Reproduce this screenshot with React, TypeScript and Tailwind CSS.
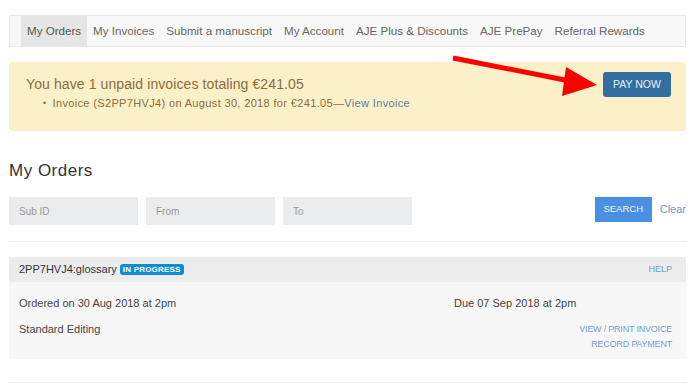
import React from "react";

export default function App() {
  const tabs = ["My Orders", "My Invoices", "Submit a manuscript", "My Account", "AJE Plus & Discounts", "AJE PrePay", "Referral Rewards"];
  return (
    <div className="relative w-[695px] h-[392px] bg-white px-[9px] overflow-hidden" style={{ fontFamily: '"Liberation Sans", Arial, sans-serif' }}>
      {/* nav */}
      <div className="mt-[15px] h-[32px] w-[677px] border border-[#e7e7e7] bg-[#f8f8f8] flex items-stretch pl-[11px]">
        {tabs.map((t, i) => (
          <div
            key={t}
            className={`flex items-center px-[6px] whitespace-nowrap text-[11.6px] ${i === 0 ? "bg-[#e5e5e5] text-[#555]" : "text-[#666]"}`}
          >
            {t}
          </div>
        ))}
      </div>

      {/* banner */}
      <div className="mt-[15px] h-[69px] w-[677px] rounded-[4px] bg-[#fcf0c9] flex justify-between pl-[17px] pr-[15px]">
        <div className="pt-[13px]">
          <div className="text-[14px] leading-[18px] text-[#8a6d3b] tracking-[0.1px] whitespace-nowrap">You have 1 unpaid invoices totaling €241.05</div>
          <div className="mt-[3px] flex items-center text-[11px] leading-[14px] text-[#8a6d3b] pl-[17px] tracking-[0.35px] whitespace-nowrap">
            <span className="mr-[6px] text-[9px]">•</span>
            <span>Invoice (S2PP7HVJ4) on August 30, 2018 for €241.05—</span>
            <span className="text-[#5b7fa3]">View Invoice</span>
          </div>
        </div>
        <div className="pt-[10px]">
          <div className="w-[68px] h-[25px] rounded-[3px] bg-[#326fa0] flex items-center justify-center text-[10.5px] text-[#e6eef5]">PAY NOW</div>
        </div>
      </div>

      {/* heading */}
      <div className="mt-[30px] text-[17px] leading-[20px] text-[#333] tracking-[0.5px]">My Orders</div>

      {/* search row */}
      <div className="mt-[16px] flex items-start">
        <div className="w-[129px] h-[28px] bg-[#ebeced] flex items-center pl-[10px] text-[10px] text-[#999]">Sub ID</div>
        <div className="ml-[8px] w-[129px] h-[28px] bg-[#ebeced] flex items-center pl-[10px] text-[10px] text-[#999]">From</div>
        <div className="ml-[8px] w-[129px] h-[28px] bg-[#ebeced] flex items-center pl-[10px] text-[10px] text-[#999]">To</div>
        <div className="ml-auto w-[57px] h-[25px] bg-[#4a90e2] flex items-center justify-center text-[9.5px] text-[#eef4fc]">SEARCH</div>
        <div className="ml-[8px] h-[25px] flex items-center text-[11px] text-[#6f97c8]">Clear</div>
      </div>

      <div className="mt-[16px] w-[677px] h-px bg-[#eeeeee]" />

      {/* order card */}
      <div className="mt-[15px] w-[677px]">
        <div className="h-[25px] bg-[#ececec] flex items-center px-[10px]">
          <span className="text-[11px] text-[#333]">2PP7HVJ4:glossary</span>
          <span className="ml-[3px] h-[11px] px-[3px] rounded-[3px] bg-[#0d8ed3] text-white text-[8px] leading-[11px] font-bold tracking-[0.2px]">IN PROGRESS</span>
          <span className="ml-auto pr-[4px] text-[9px] text-[#6f9fe0]">HELP</span>
        </div>
        <div className="h-[77px] bg-[#f7f7f7] flex px-[10px] pr-[14px]">
          <div className="flex-1">
            <div className="mt-[14px] text-[11px] leading-[14px] text-[#444]">Ordered on 30 Aug 2018 at 2pm</div>
            <div className="mt-[12px] text-[11px] leading-[14px] text-[#444]">Standard Editing</div>
          </div>
          <div className="w-[218px] flex flex-col">
            <div className="mt-[14px] text-[11px] leading-[14px] text-[#444]">Due 07 Sep 2018 at 2pm</div>
            <div className="mt-[14px] text-right text-[9px] leading-[11px] text-[#6f9fe0] tracking-[-0.2px]">VIEW / PRINT INVOICE</div>
            <div className="mt-[4px] text-right text-[9px] leading-[11px] text-[#6f9fe0] tracking-[-0.2px]">RECORD PAYMENT</div>
          </div>
        </div>
      </div>

      <div className="mt-[23px] w-[677px] h-px bg-[#eeeeee]" />

      {/* red arrow annotation */}
      <svg className="absolute left-0 top-0 pointer-events-none" width="695" height="392">
        <line x1="453" y1="58" x2="575" y2="82" stroke="#ff0000" strokeWidth="5" />
        <polygon points="566,67 597,85 562,96" fill="#ff0000" />
      </svg>
    </div>
  );
}
